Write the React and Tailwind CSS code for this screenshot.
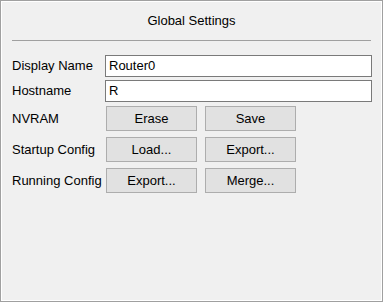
import React from 'react';

const font = { fontFamily: '"Liberation Sans", Arial, sans-serif' };

const Field = ({ label, value }) => (
  <div className="flex items-center h-[22px]">
    <span className="w-[93px] shrink-0 text-[13px] text-black">{label}</span>
    <div className="w-[267px] h-[22px] border border-[#7a7a7a] bg-white flex items-center px-[3px] text-[13px] text-black">
      {value}
    </div>
  </div>
);

const Btn = ({ children }) => (
  <button className="w-[91px] h-[25px] border border-[#adadad] bg-[#e1e1e1] text-[13px] text-black flex items-center justify-center">
    {children}
  </button>
);

const ButtonRow = ({ label, a, b }) => (
  <div className="flex items-center h-[25px]">
    <span className="w-[94px] shrink-0 text-[13px] text-black whitespace-nowrap">{label}</span>
    <div className="flex gap-[8px]">
      <Btn>{a}</Btn>
      <Btn>{b}</Btn>
    </div>
  </div>
);

export default function App() {
  return (
    <div style={font} className="w-[383px] h-[302px] bg-[#a0a0a0] p-px">
      <div className="w-full h-full border border-white bg-[#f0f0f0] flex flex-col">
        <div className="h-[36px] flex items-center justify-center pt-[1px] text-[13px] text-black">
          Global Settings
        </div>
        <div className="mx-[10px] h-px bg-[#a0a0a0] mt-[2px]" />
        <div className="flex flex-col pl-[10px] pt-[14px]">
          <div className="flex flex-col gap-[3px]">
            <Field label="Display Name" value="Router0" />
            <Field label="Hostname" value="R" />
          </div>
          <div className="flex flex-col gap-[6px] mt-[4px]">
            <ButtonRow label="NVRAM" a="Erase" b="Save" />
            <ButtonRow label="Startup Config" a="Load..." b="Export..." />
            <ButtonRow label="Running Config" a="Export..." b="Merge..." />
          </div>
        </div>
      </div>
    </div>
  );
}
